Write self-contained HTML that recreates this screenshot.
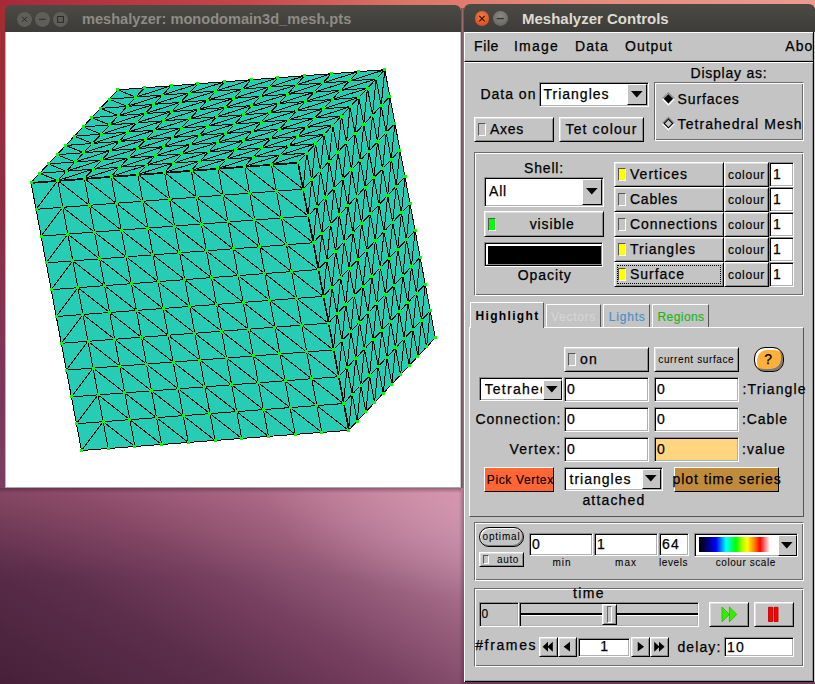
<!DOCTYPE html>
<html><head><meta charset="utf-8"><style>
html,body{margin:0;padding:0;}
body{width:815px;height:684px;overflow:hidden;position:relative;font-family:"Liberation Sans",sans-serif;background:#6e3a5c;}
.t{position:absolute;white-space:nowrap;line-height:1;-webkit-text-stroke:0.25px currentColor;}
.r,.s,.g,.f{position:absolute;box-sizing:border-box;}
.r{background:#c4c4c4;border:1px solid;border-color:#fff #000 #000 #fff;box-shadow:inset 1px 1px 0 #dedede,inset -1px -1px 0 #8c8c8c;}
.s{background:#fff;border:1px solid;border-color:#8c8c8c #fff #fff #8c8c8c;box-shadow:inset 1px 1px 0 #000,inset -1px -1px 0 #b0b0b0;}
.g{border:1px solid;border-color:#6a6a6a #fff #fff #6a6a6a;box-shadow:inset 1px 1px 0 #fff,inset -1px -1px 0 #6a6a6a;}
</style></head><body>
<div style="position:absolute;left:0;top:0;width:815px;height:14px;background:linear-gradient(90deg,#a8283a 0%,#c8454a 30%,#dd7468 50%,#e48a7c 70%,#eb9c90 100%)"></div>
<div style="position:absolute;left:0;top:5px;width:6px;height:484px;background:linear-gradient(#a52c32 0%,#8e2e42 40%,#7c3658 75%,#7a3e62 100%)"></div>
<div style="position:absolute;left:0;top:488px;width:464px;height:196px;background:linear-gradient(180deg,rgba(200,110,130,0.28) 0px,rgba(200,110,130,0) 90px),radial-gradient(ellipse 200px 110px at 464px 0px,rgba(225,175,200,0.5) 0%,rgba(225,175,200,0) 100%),linear-gradient(30deg,rgb(70,32,56) 0%,rgb(92,46,76) 30%,rgb(120,64,96) 50%,rgb(158,100,130) 72%,rgb(212,158,184) 100%)"></div>
<div style="position:absolute;left:0;top:488px;width:461px;height:5px;background:linear-gradient(rgba(40,10,30,0.35),rgba(40,10,30,0))"></div>
<div style="position:absolute;left:461px;top:8px;width:3px;height:24px;background:linear-gradient(90deg,#5a4a48,#9a6868 40%,#9a6868 60%,#5a4a48)"></div>
<div style="position:absolute;left:461px;top:32px;width:1px;height:456px;background:#646060"></div>
<div style="position:absolute;left:462px;top:32px;width:2px;height:456px;background:linear-gradient(90deg,#7c5c6a,#8a7a80)"></div>
<div style="position:absolute;left:459px;top:488px;width:5px;height:196px;background:linear-gradient(90deg,rgba(60,20,40,0),rgba(60,20,40,0.35))"></div>
<div style="position:absolute;left:464px;top:682px;width:351px;height:2px;background:#6e3a5c"></div>
<div style="position:absolute;left:464px;top:4px;width:351px;height:29px;background:linear-gradient(#4b4a45,#3c3b37);border-radius:6px 6px 0 0"></div>
<div style="position:absolute;left:474.6px;top:11.2px;width:14.8px;height:14.8px;border-radius:50%;background:radial-gradient(circle at 50% 35%,#f57a4a,#e05a24 60%,#c2441a)"></div>
<div style="position:absolute;left:492.9px;top:11.2px;width:14.8px;height:14.8px;border-radius:50%;background:radial-gradient(circle at 50% 35%,#8a8984,#6c6b66 70%,#5c5b57)"></div>
<svg style="position:absolute;left:464px;top:0" width="60" height="36"><path d="M15.3 15.9L20.7 21.3M20.7 15.9L15.3 21.3" stroke="#2a1208" stroke-width="1.1"/><path d="M32.8 18.6h7" stroke="#35342f" stroke-width="1.3"/></svg>
<div class="t" style="left:522px;top:10.84px;font-size:15px;color:#dfdbd2;font-weight:bold;letter-spacing:0.000px;-webkit-text-stroke:0;">Meshalyzer Controls</div>
<div style="position:absolute;left:464px;top:32px;width:350px;height:650px;background:#c4c4c4;box-sizing:border-box;border-right:1px solid #000;border-bottom:1px solid #000;box-shadow:inset -1px -1px 0 #9a9a9a"></div>
<div style="position:absolute;left:814px;top:32px;width:1px;height:650px;background:#d0d0d0"></div>
<div style="position:absolute;left:464px;top:32px;width:1px;height:650px;background:#fff"></div>
<div style="position:absolute;left:464px;top:62px;width:349px;height:1px;background:#fff"></div>
<div style="position:absolute;left:464px;top:32px;width:349px;height:30px;box-sizing:border-box;border-top:1px solid #fff;border-left:1px solid #fff;border-bottom:1px solid #000;box-shadow:inset 0 -1px 0 #a8a8a8"></div>
<div class="t" style="left:474px;top:39.37px;font-size:14px;color:#000;font-weight:normal;letter-spacing:0.613px;">File</div>
<div class="t" style="left:514px;top:39.37px;font-size:14px;color:#000;font-weight:normal;letter-spacing:1.222px;">Image</div>
<div class="t" style="left:575px;top:39.37px;font-size:14px;color:#000;font-weight:normal;letter-spacing:1.109px;">Data</div>
<div class="t" style="left:625px;top:39.37px;font-size:14px;color:#000;font-weight:normal;letter-spacing:0.997px;">Output</div>
<div class="t" style="left:785.3px;top:39.37px;font-size:14px;color:#000;font-weight:normal;letter-spacing:1.031px;">Abo</div>
<div class="t" style="left:480.4px;top:87.37px;font-size:14px;color:#000;font-weight:normal;letter-spacing:0.998px;">Data on</div>
<div class="s" style="left:539px;top:82px;width:110px;height:25px;"></div>
<div class="t" style="left:543.5px;top:87.37px;font-size:14px;color:#000;font-weight:normal;letter-spacing:0.997px;">Triangles</div>
<div class="r" style="left:627px;top:84px;width:20px;height:21px;box-shadow:none"></div>
<svg style="position:absolute;left:630.6px;top:90.6px" width="12.6" height="7.6"><path d="M0 0H11.6L5.8 6.6z" fill="#000"/></svg>
<div class="r" style="left:474px;top:117px;width:80px;height:25px;"></div>
<div class="f" style="left:478px;top:123px;width:8px;height:13px;border:1px solid;border-color:#555 #fff #fff #555;background:transparent"></div>
<div class="t" style="left:490px;top:122.37px;font-size:14px;color:#000;font-weight:normal;letter-spacing:0.719px;">Axes</div>
<div class="r" style="left:559px;top:117px;width:85px;height:25px;"></div>
<div class="t" style="left:565.5px;top:122.37px;font-size:14px;color:#000;font-weight:normal;letter-spacing:1.133px;">Tet colour</div>
<div class="t" style="left:690.5px;top:66.37px;font-size:14px;color:#000;font-weight:normal;letter-spacing:0.777px;">Display as:</div>
<div class="g" style="left:654px;top:82px;width:150px;height:59px;"></div>
<svg style="position:absolute;left:656px;top:88px" width="24" height="46"><path d="M6.4 10.8L12.4 4.8L18.4 10.8" fill="none" stroke="#8a8a8a" stroke-width="1.3"/><path d="M18.4 10.8L12.4 16.8L6.4 10.8" fill="none" stroke="#fff" stroke-width="1.3"/><path d="M12.4 6.2L17 10.8L12.4 15.4L7.8 10.8z" fill="#000"/><path d="M6.4 35.5L12.4 29.5L18.4 35.5" fill="none" stroke="#8a8a8a" stroke-width="1.3"/><path d="M18.4 35.5L12.4 41.5L6.4 35.5" fill="none" stroke="#fff" stroke-width="1.3"/><path d="M12.4 31.2L16.7 35.5L12.4 39.8L8.1 35.5z" fill="none" stroke="#000" stroke-width="1.1"/></svg>
<div class="t" style="left:677.6px;top:92.37px;font-size:14px;color:#000;font-weight:normal;letter-spacing:0.846px;">Surfaces</div>
<div class="t" style="left:677.6px;top:116.87px;font-size:14px;color:#000;font-weight:normal;letter-spacing:1.056px;">Tetrahedral Mesh</div>
<div class="g" style="left:474px;top:152px;width:330px;height:144px;"></div>
<div class="t" style="left:524px;top:161.37px;font-size:14px;color:#000;font-weight:normal;letter-spacing:0.831px;">Shell:</div>
<div class="s" style="left:484px;top:177px;width:120px;height:30px;"></div>
<div class="t" style="left:489px;top:184.37px;font-size:14px;color:#000;font-weight:normal;letter-spacing:0.812px;">All</div>
<div class="r" style="left:582px;top:179px;width:20px;height:26px;box-shadow:none"></div>
<svg style="position:absolute;left:585.6px;top:188.4px" width="12.6" height="7.6"><path d="M0 0H11.6L5.8 6.6z" fill="#000"/></svg>
<div class="r" style="left:484px;top:211px;width:120px;height:26px;"></div>
<div class="f" style="left:488px;top:218px;width:8px;height:13px;border:1px solid;border-color:#555 #fff #fff #555;background:#00ff00"></div>
<div class="t" style="left:529.7px;top:217.37px;font-size:14px;color:#000;font-weight:normal;letter-spacing:0.873px;">visible</div>
<div class="s" style="left:484px;top:242px;width:119px;height:25px;background:#000;box-shadow:inset 1px 1px 0 #000"></div>
<div style="position:absolute;left:486px;top:244px;width:116px;height:21px;box-sizing:border-box;border-style:solid;border-width:2px 1px 1px 2px;border-color:#fff #8c8c8c #8c8c8c #fff;background:#000"></div>
<div class="t" style="left:517.7px;top:268.37px;font-size:14px;color:#000;font-weight:normal;letter-spacing:0.935px;">Opacity</div>
<div class="r" style="left:614px;top:162px;width:110px;height:25px;"></div>
<div class="f" style="left:618px;top:168px;width:8px;height:13px;border:1px solid;border-color:#555 #fff #fff #555;background:#ffff00"></div>
<div class="t" style="left:630px;top:167.37px;font-size:14px;color:#000;font-weight:normal;letter-spacing:1.025px;">Vertices</div>
<div class="r" style="left:724px;top:162px;width:45px;height:25px;"></div>
<div class="t" style="left:728px;top:169.03px;font-size:12px;color:#000;font-weight:normal;letter-spacing:0.719px;-webkit-text-stroke:0.15px currentColor;">colour</div>
<div class="s" style="left:769px;top:162px;width:25px;height:25px;"></div>
<div class="t" style="left:773px;top:167.37px;font-size:14px;color:#000;font-weight:normal;letter-spacing:1.219px;">1</div>
<div class="r" style="left:614px;top:187px;width:110px;height:25px;"></div>
<div class="f" style="left:618px;top:193px;width:8px;height:13px;border:1px solid;border-color:#555 #fff #fff #555;background:transparent"></div>
<div class="t" style="left:630px;top:192.37px;font-size:14px;color:#000;font-weight:normal;letter-spacing:0.740px;">Cables</div>
<div class="r" style="left:724px;top:187px;width:45px;height:25px;"></div>
<div class="t" style="left:728px;top:194.03px;font-size:12px;color:#000;font-weight:normal;letter-spacing:0.719px;-webkit-text-stroke:0.15px currentColor;">colour</div>
<div class="s" style="left:769px;top:187px;width:25px;height:25px;"></div>
<div class="t" style="left:773px;top:192.37px;font-size:14px;color:#000;font-weight:normal;letter-spacing:1.219px;">1</div>
<div class="r" style="left:614px;top:212px;width:110px;height:25px;"></div>
<div class="f" style="left:618px;top:218px;width:8px;height:13px;border:1px solid;border-color:#555 #fff #fff #555;background:transparent"></div>
<div class="t" style="left:630px;top:217.37px;font-size:14px;color:#000;font-weight:normal;letter-spacing:0.928px;">Connections</div>
<div class="r" style="left:724px;top:212px;width:45px;height:25px;"></div>
<div class="t" style="left:728px;top:219.03px;font-size:12px;color:#000;font-weight:normal;letter-spacing:0.719px;-webkit-text-stroke:0.15px currentColor;">colour</div>
<div class="s" style="left:769px;top:212px;width:25px;height:25px;"></div>
<div class="t" style="left:773px;top:217.37px;font-size:14px;color:#000;font-weight:normal;letter-spacing:1.219px;">1</div>
<div class="r" style="left:614px;top:237px;width:110px;height:25px;"></div>
<div class="f" style="left:618px;top:243px;width:8px;height:13px;border:1px solid;border-color:#555 #fff #fff #555;background:#ffff00"></div>
<div class="t" style="left:630px;top:242.37px;font-size:14px;color:#000;font-weight:normal;letter-spacing:0.997px;">Triangles</div>
<div class="r" style="left:724px;top:237px;width:45px;height:25px;"></div>
<div class="t" style="left:728px;top:244.03px;font-size:12px;color:#000;font-weight:normal;letter-spacing:0.719px;-webkit-text-stroke:0.15px currentColor;">colour</div>
<div class="s" style="left:769px;top:237px;width:25px;height:25px;"></div>
<div class="t" style="left:773px;top:242.37px;font-size:14px;color:#000;font-weight:normal;letter-spacing:1.219px;">1</div>
<div class="r" style="left:614px;top:262px;width:110px;height:25px;"></div>
<div class="f" style="left:618px;top:268px;width:8px;height:13px;border:1px solid;border-color:#555 #fff #fff #555;background:#ffff00"></div>
<div class="t" style="left:630px;top:267.37px;font-size:14px;color:#000;font-weight:normal;letter-spacing:0.967px;">Surface</div>
<div class="r" style="left:724px;top:262px;width:45px;height:25px;"></div>
<div class="t" style="left:728px;top:269.03px;font-size:12px;color:#000;font-weight:normal;letter-spacing:0.719px;-webkit-text-stroke:0.15px currentColor;">colour</div>
<div class="s" style="left:769px;top:262px;width:25px;height:25px;"></div>
<div class="t" style="left:773px;top:267.37px;font-size:14px;color:#000;font-weight:normal;letter-spacing:1.219px;">1</div>
<div style="position:absolute;left:617px;top:265px;width:104px;height:19px;box-sizing:border-box;border:1px dotted #000"></div>
<div class="f" style="left:469px;top:327px;width:335px;height:190px;border-style:solid;border-width:1px;border-color:#fff #555 #555 #fff"></div>
<div class="f" style="left:546px;top:304px;width:55px;height:23px;border-style:solid;border-width:1px 1px 0 1px;border-color:#fff #555 #555 #fff"></div>
<div class="f" style="left:603px;top:304px;width:47px;height:23px;border-style:solid;border-width:1px 1px 0 1px;border-color:#fff #555 #555 #fff"></div>
<div class="f" style="left:652px;top:304px;width:57px;height:23px;border-style:solid;border-width:1px 1px 0 1px;border-color:#fff #555 #555 #fff"></div>
<div class="f" style="left:470px;top:302px;width:74px;height:26px;background:#c4c4c4;border-style:solid;border-width:1px 1px 0 1px;border-color:#fff #555 #555 #fff"></div>
<div class="t" style="left:475.5px;top:309.53px;font-size:12px;color:#000;font-weight:bold;letter-spacing:1.337px;-webkit-text-stroke:0;">Highlight</div>
<div class="t" style="left:551px;top:310.63px;font-size:12px;color:#d6d6d6;font-weight:normal;letter-spacing:0.712px;-webkit-text-stroke:0.15px currentColor;">Vectors</div>
<div class="t" style="left:608.7px;top:311.03px;font-size:12px;color:#4a8ec8;font-weight:normal;letter-spacing:0.831px;-webkit-text-stroke:0.15px currentColor;">Lights</div>
<div class="t" style="left:657.5px;top:311.03px;font-size:12px;color:#18b818;font-weight:normal;letter-spacing:0.424px;-webkit-text-stroke:0.15px currentColor;">Regions</div>
<div class="r" style="left:564px;top:347px;width:85px;height:25px;"></div>
<div class="f" style="left:568px;top:353px;width:8px;height:13px;border:1px solid;border-color:#555 #fff #fff #555;background:transparent"></div>
<div class="t" style="left:580px;top:352.37px;font-size:14px;color:#000;font-weight:normal;letter-spacing:1.219px;">on</div>
<div class="r" style="left:654px;top:347px;width:85px;height:25px;"></div>
<div class="t" style="left:658.3px;top:354.69px;font-size:10px;color:#000;font-weight:normal;letter-spacing:0.620px;-webkit-text-stroke:0.05px currentColor;">current surface</div>
<div style="position:absolute;left:754px;top:347px;width:30px;height:25px;box-sizing:border-box;border-radius:11px/11px;background:#ffb03a;border:1px solid #000;box-shadow:inset 2px 2px 0 #fff,inset -2px -2px 0 #7a7a7a"></div>
<div class="t" style="left:764.2px;top:352.37px;font-size:14px;color:#000;font-weight:normal;letter-spacing:0.000px;">?</div>
<div class="s" style="left:479px;top:377px;width:84px;height:24px;"></div>
<div class="t" style="left:484.5px;top:382.37px;font-size:14px;color:#000;font-weight:normal;letter-spacing:1.273px;width:57.5px;overflow:hidden;">Tetrahedral</div>
<div class="r" style="left:542.5px;top:380px;width:19px;height:20px;box-shadow:none"></div>
<svg style="position:absolute;left:545.5px;top:386.4px" width="12.6" height="7.6"><path d="M0 0H11.6L5.8 6.6z" fill="#000"/></svg>
<div class="s" style="left:564px;top:377px;width:85px;height:25px;"></div>
<div class="s" style="left:654px;top:377px;width:85px;height:25px;"></div>
<div class="t" style="left:567px;top:381.87px;font-size:14px;color:#000;font-weight:normal;letter-spacing:1.219px;">0</div>
<div class="t" style="left:657px;top:381.87px;font-size:14px;color:#000;font-weight:normal;letter-spacing:1.219px;">0</div>
<div class="s" style="left:564px;top:407px;width:85px;height:25px;"></div>
<div class="s" style="left:654px;top:407px;width:85px;height:25px;"></div>
<div class="t" style="left:567px;top:411.87px;font-size:14px;color:#000;font-weight:normal;letter-spacing:1.219px;">0</div>
<div class="t" style="left:657px;top:411.87px;font-size:14px;color:#000;font-weight:normal;letter-spacing:1.219px;">0</div>
<div class="s" style="left:564px;top:437px;width:85px;height:25px;"></div>
<div class="s" style="left:654px;top:437px;width:85px;height:25px;background:#ffd67f"></div>
<div class="t" style="left:567px;top:441.87px;font-size:14px;color:#000;font-weight:normal;letter-spacing:1.219px;">0</div>
<div class="t" style="left:657px;top:441.87px;font-size:14px;color:#000;font-weight:normal;letter-spacing:1.219px;">0</div>
<div class="t" style="left:742.6px;top:382.37px;font-size:14px;color:#000;font-weight:normal;letter-spacing:1.120px;">:Triangle</div>
<div class="t" style="left:742px;top:412.37px;font-size:14px;color:#000;font-weight:normal;letter-spacing:0.924px;">:Cable</div>
<div class="t" style="left:742px;top:441.87px;font-size:14px;color:#000;font-weight:normal;letter-spacing:1.109px;">:value</div>
<div class="t" style="left:475.4px;top:411.87px;font-size:14px;color:#000;font-weight:normal;letter-spacing:1.028px;">Connection:</div>
<div class="t" style="left:509.4px;top:442.37px;font-size:14px;color:#000;font-weight:normal;letter-spacing:1.203px;">Vertex:</div>
<div class="r" style="left:484px;top:467px;width:70px;height:25px;background:#ff6633;box-shadow:none"></div>
<div class="t" style="left:486.8px;top:473.53px;font-size:12px;color:#000;font-weight:normal;letter-spacing:0.635px;-webkit-text-stroke:0.15px currentColor;width:66px;overflow:hidden;">Pick Vertex</div>
<div class="s" style="left:564px;top:467px;width:99px;height:24px;"></div>
<div class="t" style="left:569.5px;top:472.37px;font-size:14px;color:#000;font-weight:normal;letter-spacing:1.012px;">triangles</div>
<div class="r" style="left:642px;top:469px;width:19px;height:20px;box-shadow:none"></div>
<svg style="position:absolute;left:645px;top:475.4px" width="12.6" height="7.6"><path d="M0 0H11.6L5.8 6.6z" fill="#000"/></svg>
<div class="r" style="left:674px;top:467px;width:105px;height:25px;background:#c08c3c;box-shadow:none"></div>
<div class="t" style="left:672.6px;top:472.37px;font-size:14px;color:#000;font-weight:normal;letter-spacing:0.931px;">plot time series</div>
<div class="t" style="left:582.4px;top:493.37px;font-size:14px;color:#000;font-weight:normal;letter-spacing:1.164px;">attached</div>
<div class="g" style="left:474px;top:522px;width:330px;height:59px;"></div>
<div style="position:absolute;left:479px;top:527px;width:45px;height:20px;box-sizing:border-box;border-radius:10px;border:1px solid #000;box-shadow:inset 1px 1px 0 #fff,inset -1px -1px 0 #777"></div>
<div class="t" style="left:482.5px;top:532.00px;font-size:10px;color:#000;font-weight:normal;letter-spacing:0.824px;-webkit-text-stroke:0.05px currentColor;">optimal</div>
<div class="r" style="left:479px;top:552px;width:45px;height:15px;"></div>
<div class="f" style="left:483px;top:555px;width:6px;height:9px;border:1px solid;border-color:#555 #fff #fff #555;background:transparent"></div>
<div class="t" style="left:497px;top:555.20px;font-size:10px;color:#000;font-weight:normal;letter-spacing:0.633px;-webkit-text-stroke:0.05px currentColor;">auto</div>
<div class="s" style="left:529px;top:533px;width:64px;height:23px;"></div>
<div class="t" style="left:532px;top:536.97px;font-size:14px;color:#000;font-weight:normal;letter-spacing:1.219px;">0</div>
<div class="s" style="left:594px;top:533px;width:64px;height:23px;"></div>
<div class="t" style="left:597px;top:536.97px;font-size:14px;color:#000;font-weight:normal;letter-spacing:1.219px;">1</div>
<div class="s" style="left:659px;top:533px;width:30px;height:23px;"></div>
<div class="t" style="left:662px;top:536.97px;font-size:14px;color:#000;font-weight:normal;letter-spacing:1.219px;">64</div>
<div class="t" style="left:552.5px;top:558.20px;font-size:10px;color:#000;font-weight:normal;letter-spacing:0.964px;-webkit-text-stroke:0.05px currentColor;">min</div>
<div class="t" style="left:615.1px;top:558.20px;font-size:10px;color:#000;font-weight:normal;letter-spacing:1.036px;-webkit-text-stroke:0.05px currentColor;">max</div>
<div class="t" style="left:659px;top:558.20px;font-size:10px;color:#000;font-weight:normal;letter-spacing:0.573px;-webkit-text-stroke:0.05px currentColor;">levels</div>
<div class="t" style="left:715.8px;top:558.20px;font-size:10px;color:#000;font-weight:normal;letter-spacing:0.553px;-webkit-text-stroke:0.05px currentColor;">colour scale</div>
<div class="s" style="left:694px;top:533px;width:104px;height:24px;"></div>
<div style="position:absolute;left:698.6px;top:537px;width:71px;height:15.4px;background:linear-gradient(90deg,#000 0%,#00008c 14%,#0000ff 24%,#00ffff 38%,#00ff00 52%,#c0ff00 62%,#ffff00 68%,#ff8000 78%,#ff0000 86%,#fff 100%)"></div>
<div class="r" style="left:777.5px;top:535px;width:19px;height:21px;box-shadow:none"></div>
<svg style="position:absolute;left:780.8px;top:542.4px" width="12.6" height="7.6"><path d="M0 0H11.6L5.8 6.6z" fill="#000"/></svg>
<div class="g" style="left:474px;top:588px;width:330px;height:79px;"></div>
<div class="t" style="left:573px;top:585.67px;font-size:14px;color:#000;font-weight:normal;letter-spacing:1.391px;">time</div>
<div class="s" style="left:479px;top:602px;width:40px;height:25px;background:#c4c4c4"></div>
<div class="t" style="left:481.4px;top:608.33px;font-size:12px;color:#000;font-weight:normal;letter-spacing:1.328px;-webkit-text-stroke:0.15px currentColor;">0</div>
<div class="s" style="left:519px;top:602px;width:180px;height:25px;background:#c4c4c4"></div>
<div style="position:absolute;left:521px;top:612.6px;width:177px;height:2.4px;background:#000;box-shadow:0 1px 0 #fff"></div>
<div class="r" style="left:602px;top:604px;width:15px;height:21px;"></div>
<div style="position:absolute;left:607px;top:606px;width:5px;height:17px;box-sizing:border-box;border:1px solid;border-color:#666 #fff #fff #666"></div>
<div class="r" style="left:709px;top:602px;width:40px;height:25px;"></div>
<svg style="position:absolute;left:709px;top:602px" width="40" height="25"><path d="M13 5L20.4 12.4L13 19.8z M20.4 5L27.8 12.4L20.4 19.8z" fill="#33ee00" stroke="#22aa00" stroke-width="0.7"/></svg>
<div class="r" style="left:754px;top:602px;width:40px;height:25px;"></div>
<svg style="position:absolute;left:754px;top:602px" width="40" height="25"><path d="M14.5 5.3h4v14.2h-4z M20 5.3h4v14.2h-4z" fill="#ff0000" stroke="#b00000" stroke-width="0.8"/></svg>
<div class="t" style="left:475.2px;top:638.37px;font-size:14px;color:#000;font-weight:normal;letter-spacing:1.636px;">#frames</div>
<div class="r" style="left:539px;top:637px;width:19px;height:20px;"></div>
<div class="r" style="left:558px;top:637px;width:19px;height:20px;"></div>
<div class="s" style="left:578px;top:638px;width:52px;height:19px;"></div>
<div class="t" style="left:600.3px;top:638.97px;font-size:14px;color:#000;font-weight:normal;letter-spacing:1.219px;">1</div>
<div class="r" style="left:631px;top:637px;width:19px;height:20px;"></div>
<div class="r" style="left:650px;top:637px;width:19px;height:20px;"></div>
<svg style="position:absolute;left:539px;top:637px" width="131" height="20"><path d="M3.6 9.7L9 4.7V14.7z M8.4 9.7L13.8 4.7V14.7z M24.6 9.7L31 4.8V14.6z" fill="#000"/><path d="M98.7 4.8L105.1 9.7L98.7 14.6z M115.2 4.7L120.6 9.7L115.2 14.7z M120 4.7L125.6 9.7L120 14.7z" fill="#000"/></svg>
<div class="t" style="left:677.4px;top:639.67px;font-size:14px;color:#000;font-weight:normal;letter-spacing:1.109px;">delay:</div>
<div class="s" style="left:724px;top:637px;width:70px;height:20px;"></div>
<div class="t" style="left:727px;top:640.37px;font-size:14px;color:#000;font-weight:normal;letter-spacing:1.219px;">10</div>
<div style="position:absolute;left:5px;top:5px;width:456px;height:28px;background:linear-gradient(#4b4a45,#3c3b37);border-radius:6px 6px 0 0"></div>
<div style="position:absolute;left:5px;top:32px;width:456px;height:456px;background:#fff;box-sizing:border-box;border-left:1px solid #b8b8b8;border-right:1px solid #c8c8c8;border-bottom:1px solid #a8a8a8"></div>
<div style="position:absolute;left:17.1px;top:11.9px;width:14.8px;height:14.8px;border-radius:50%;background:#5f5e59"></div>
<div style="position:absolute;left:34.9px;top:11.9px;width:14.8px;height:14.8px;border-radius:50%;background:#5f5e59"></div>
<div style="position:absolute;left:53.0px;top:11.9px;width:14.8px;height:14.8px;border-radius:50%;background:#5f5e59"></div>
<svg style="position:absolute;left:0;top:0" width="80" height="36"><path d="M22 16.8L27 21.8M27 16.8L22 21.8" stroke="#2a2926" stroke-width="1"/><path d="M39 19.3h6.6" stroke="#2a2926" stroke-width="1"/><rect x="57.6" y="16.5" width="5.8" height="5.8" fill="none" stroke="#2a2926" stroke-width="1"/></svg>
<div class="t" style="left:82px;top:11.97px;font-size:14.6px;color:#8e8c86;font-weight:bold;letter-spacing:0.000px;-webkit-text-stroke:0;">meshalyzer: monodomain3d_mesh.pts</div>
<svg width="456" height="456" viewBox="5 32 456 456" style="position:absolute;left:5px;top:32px">
<polygon points="31,182.5 117.75,89.85 384.8,69.7 435.3,337.7 348.55,430.35 81.5,450.5" fill="#26ccb4"/>
<path d="M316.8 405.57L321.85 432.37M383.25 393.29L386.88 357.23M126.26 256.86L131.31 283.66M238.13 275.6L264.84 273.58M350.75 331.42L355.8 358.22M83.73 152.69L119.11 141.41M314.72 118.04L323.4 108.78M99.56 258.87L104.61 285.67M386.88 357.23L391.93 384.02M340.75 90.25L376.12 78.96M119.79 167.19L146.5 165.18M39.67 173.24L66.38 171.22M100.4 108.38L118.43 115.63M269.31 87.02L277.98 77.76M390.5 321.16L395.55 347.96M364.48 348.96L369.52 375.75M371.73 276.82L376.77 303.62M296.6 298.37L301.65 325.16M173.2 163.16L199.91 161.14M396.32 186.16L401.38 212.96M280.02 155.1L288.7 145.84M109.75 124.9L145.13 113.61M206.38 250.81L211.43 277.61M358.1 71.72L384.8 69.7M338.45 376.75L343.5 403.55M308.15 215.95L313.2 242.75M93.05 368.09L124.81 392.87M92.41 143.43L127.78 132.14M180.51 102.34L215.89 91.05M373.92 177.89L382.6 168.63M228.03 222L233.09 248.8M344.27 241.75L349.32 268.56M101.08 134.16L109.75 124.9M57.7 180.49L93.08 169.2M179.68 252.82L206.38 250.81M83.05 126.91L101.08 134.16M290.09 407.58L321.85 432.37M199.88 360.02L226.58 358.01M347.9 205.69L352.95 232.49M329.12 161.36L334.18 188.16M164.53 172.43L191.23 170.41M39.67 173.24L48.35 163.97M146.5 165.18L155.17 155.91M251.95 105.55L260.63 96.29M342.08 340.68L347.12 367.49M72.85 260.88L104.61 285.67M243.28 114.82L251.95 105.55M373.15 339.69L381.83 330.43M370.3 213.96L373.92 177.89M46.15 262.9L72.85 260.88M373.92 177.89L378.97 204.69M208.58 151.88L243.96 140.6M301.65 325.16L306.7 351.97M253.32 157.12L261.99 147.85M217.25 142.62L225.93 133.35M98.11 394.88L124.81 392.87M173.2 163.16L208.58 151.88M191.23 170.41L226.61 159.13M244.64 166.38L271.35 164.37M168.12 335.24L173.17 362.04M321.88 233.48L326.93 260.28M368.1 312.89L371.73 276.82M375.35 240.76L378.97 204.69M392.7 222.23L401.38 212.96M136.37 310.46L163.07 308.44M409.27 365.5L417.95 356.23M303.1 189.15L306.73 153.08M181.19 128.12L207.9 126.1M194.82 333.23L226.58 358.01M137.82 174.44L146.5 165.18M221.53 331.21L253.28 356M65.7 145.44L74.38 136.18M322.72 82.99L358.1 71.72M129.86 419.67L134.91 446.47M366.68 250.02L375.35 240.76M111.11 176.46L116.16 203.26M372.5 115.03L381.18 105.76M135.78 97.1L144.45 87.84M355.8 358.22L359.42 322.15M206.38 250.81L238.13 275.6M412.9 329.43L416.52 293.37M389.07 258.29L397.75 249.03M243.19 302.39L248.24 329.19M188.32 442.44L215.03 440.43M174.62 226.03L206.38 250.81M311.78 179.88L315.4 143.82M285.04 380.78L290.09 407.58M249.69 193.18L254.74 219.98M301.65 325.16L328.35 323.15M46.15 262.9L51.2 289.7M174.62 226.03L179.68 252.82M276.4 191.17L303.1 189.15M141.41 337.25L146.46 364.06M119.79 167.19L155.17 155.91M93.08 169.2L119.79 167.19M94.51 232.07L99.56 258.87M335.6 251.02L339.22 214.95M244.64 166.38L280.02 155.1M76.45 423.7L98.11 394.88M402.8 275.83L411.48 266.56M269.31 87.02L296.01 85.01M389.07 258.29L394.12 285.09M217.94 168.4L244.64 166.38M168.12 335.24L194.82 333.23M41.1 236.1L62.75 207.29M93.08 169.2L101.76 159.94M75.06 161.96L83.73 152.69M318.25 269.55L321.88 233.48M368.88 151.09L372.5 115.03M377.55 141.83L381.18 105.76M261.31 122.07L288.01 120.05M211.43 277.61L238.13 275.6M261.99 147.85L297.37 136.57M243.96 140.6L279.34 129.32M360.85 385.02L369.52 375.75M243.96 140.6L270.67 138.58M279.99 353.98L306.7 351.97M145.81 139.4L181.19 128.12M386.23 132.56L394.9 123.3M163.84 146.64L199.23 135.37M155.17 155.91L181.88 153.9M382.6 168.63L386.23 132.56M236.68 411.61L268.44 436.39M162.49 95.08L189.19 93.07M296.6 298.37L323.3 296.35M126.26 256.86L158.02 281.64M374.57 402.56L383.25 393.29M118.43 115.63L145.13 113.61M360.85 385.02L365.9 411.82M381.18 105.76L386.23 132.56M415.1 230.5L420.15 257.3M407.85 302.63L416.52 293.37M110.44 150.68L137.14 148.66M233.09 248.8L259.79 246.78M325.5 197.42L334.18 188.16M88 341.28L119.76 366.07M365.9 411.82L369.52 375.75M111.11 176.46L142.87 201.24M280.02 155.1L306.73 153.08M124.81 392.87L151.51 390.86M189.19 93.07L197.87 83.81M326.93 260.28L330.55 224.22M391.27 159.36L394.9 123.3M276.4 191.17L281.45 217.97M189.78 306.43L221.53 331.21M261.31 122.07L296.69 110.79M201.33 224.01L233.09 248.8M61.3 343.3L66.35 370.1M269.99 112.81L305.37 101.52M163.16 120.87L171.84 111.6M209.98 413.62L241.73 438.41M178.22 388.84L209.98 413.62M387.65 195.43L396.32 186.16M137.14 148.66L172.52 137.38M101.08 134.16L136.46 122.88M82.95 314.49L109.66 312.47M359.42 322.15L368.1 312.89M127.78 132.14L163.16 120.87M261.31 122.07L269.99 112.81M325.5 197.42L330.55 224.22M366.68 250.02L371.73 276.82M368.1 312.89L373.15 339.69M375.35 240.76L380.4 267.56M57.02 154.7L75.06 161.96M268.44 436.39L295.14 434.38M372.5 115.03L377.55 141.83M288.7 145.84L324.07 134.56M207.9 126.1L234.6 124.08M233.93 98.31L260.63 96.29M151.51 390.86L178.22 388.84M147.92 228.04L152.97 254.84M169.58 199.23L201.33 224.01M209.98 413.62L215.03 440.43M330.55 224.22L334.18 188.16M162.49 95.08L197.87 83.81M305.37 101.52L314.04 92.26M198.54 109.58L233.93 98.31M376.12 78.96L381.18 105.76M194.82 333.23L199.88 360.02M216.48 304.41L221.53 331.21M251.95 105.55L287.34 94.28M84.41 178.47L111.11 176.46M350.75 331.42L354.38 295.36M288.01 120.05L296.69 110.79M346.48 142.82L351.53 169.62M363.05 286.09L366.68 250.02M81.5 450.5L108.2 448.49M296.69 110.79L305.37 101.52M401.38 212.96L410.05 203.7M254.74 219.98L286.5 244.76M142.87 201.24L174.62 226.03M324.07 134.56L329.12 161.36M311.75 378.76L338.45 376.75M183.27 415.64L209.98 413.62M196.28 197.21L228.03 222M215.03 440.43L241.73 438.41M349.42 80.98L384.8 69.7M253.32 157.12L288.7 145.84M190.55 144.63L217.25 142.62M88 341.28L93.05 368.09M367.45 88.23L376.12 78.96M286.5 244.76L318.25 269.55M75.06 161.96L101.76 159.94M201.33 224.01L206.38 250.81M318.25 269.55L323.3 296.35M259.79 246.78L286.5 244.76M67.81 234.09L72.85 260.88M147.92 228.04L174.62 226.03M127.11 106.37L162.49 95.08M137.82 174.44L169.58 199.23M358.77 97.49L363.82 124.29M426.62 346.96L430.25 310.9M430.25 310.9L435.3 337.7M114.71 339.27L146.46 364.06M243.96 140.6L252.63 131.34M332.07 99.51L358.77 97.49M407.85 302.63L412.9 329.43M36.05 209.3L57.7 180.49M114.71 339.27L119.76 366.07M342.08 340.68L345.7 304.62M291.55 271.56L318.25 269.55M376.77 303.62L385.45 294.36M216.57 116.84L243.28 114.82M129.86 419.67L161.62 444.46M331.98 287.08L340.65 277.82M363.82 124.29L367.45 88.23M311.75 378.76L316.8 405.57M183.27 415.64L188.32 442.44M57.02 154.7L65.7 145.44M121.22 230.06L126.26 256.86M66.35 370.1L93.05 368.09M304.69 75.75L331.39 73.73M141.41 337.25L173.17 362.04M381.83 330.43L386.88 357.23M416.52 293.37L425.2 284.1M235.28 149.87L261.99 147.85M189.19 93.07L215.89 91.05M387.65 195.43L392.7 222.23M243.19 302.39L274.94 327.18M347.12 367.49L350.75 331.42M359.42 322.15L364.48 348.96M119.76 366.07L146.46 364.06M321.88 233.48L325.5 197.42M234.6 124.08L269.99 112.81M337.03 313.88L345.7 304.62M391.27 159.36L396.32 186.16M360.2 160.36L368.88 151.09M109.66 312.47L141.41 337.25M421.57 320.17L430.25 310.9M400.6 374.76L404.22 338.69M173.17 362.04L204.93 386.83M345.7 304.62L350.75 331.42M334.18 188.16L342.85 178.89M365.25 187.16L368.88 151.09M94.51 232.07L126.26 256.86M156.56 417.66L161.62 444.46M287.34 94.28L314.04 92.26M172.52 137.38L181.19 128.12M346.48 142.82L355.15 133.56M222.99 195.2L254.74 219.98M339.22 214.95L344.27 241.75M370.3 213.96L375.35 240.76M381.18 105.76L389.85 96.5M263.38 409.6L290.09 407.58M308.15 215.95L316.83 206.68M71.4 396.9L93.05 368.09M348.55 430.35L352.18 394.28M207.9 126.1L216.57 116.84M153.81 104.35L180.51 102.34M269.89 300.38L274.94 327.18M225.25 107.57L260.63 96.29M222.99 195.2L228.03 222M226.58 358.01L253.28 356M281.45 217.97L313.2 242.75M199.91 161.14L226.61 159.13M313.2 242.75L316.83 206.68M340.65 277.82L349.32 268.56M152.97 254.84L184.73 279.62M189.78 306.43L194.82 333.23M216.57 116.84L251.95 105.55M225.25 107.57L233.93 98.31M291.55 271.56L296.6 298.37M31 182.5L39.67 173.24M323.3 296.35L331.98 287.08M103.16 421.69L108.2 448.49M303.1 189.15L308.15 215.95M190.55 144.63L225.93 133.35M235.28 149.87L270.67 138.58M51.2 289.7L72.85 260.88M217.25 142.62L252.63 131.34M394.12 285.09L399.17 311.89M66.35 370.1L71.4 396.9M368.1 312.89L376.77 303.62M48.35 163.97L75.06 161.96M228.03 222L254.74 219.98M320.45 170.62L329.12 161.36M333.4 349.95L338.45 376.75M340.65 277.82L345.7 304.62M395.55 347.96L404.22 338.69M332.75 125.29L341.43 116.02M163.16 120.87L198.54 109.58M190.55 144.63L199.23 135.37M358.77 97.49L367.45 88.23M62.75 207.29L67.81 234.09M169.58 199.23L174.62 226.03M66.38 171.22L93.08 169.2M119.79 167.19L128.47 157.93M399.17 311.89L402.8 275.83M369.52 375.75L378.2 366.49M376.12 78.96L384.8 69.7M191.23 170.41L217.94 168.4M373.92 177.89L377.55 141.83M355.15 133.56L363.82 124.29M343.5 403.55L352.18 394.28M137.14 148.66L163.84 146.64M352.18 394.28L360.85 385.02M199.23 135.37L234.6 124.08M305.37 101.52L340.75 90.25M280.02 155.1L315.4 143.82M320.45 170.62L325.5 197.42M261.99 147.85L270.67 138.58M364.48 348.96L368.1 312.89M351.53 169.62L356.57 196.42M207.22 100.32L242.6 89.04M371.73 276.82L375.35 240.76M378.97 204.69L382.6 168.63M84.41 178.47L119.79 167.19M181.88 153.9L217.25 142.62M352.95 232.49L361.62 223.22M198.54 109.58L225.25 107.57M298.05 162.35L303.1 189.15M376.77 303.62L381.83 330.43M361.62 223.22L370.3 213.96M163.07 308.44L168.12 335.24M264.84 273.58L296.6 298.37M48.35 163.97L57.02 154.7M111.11 176.46L119.79 167.19M155.17 155.91L163.84 146.64M381.83 330.43L390.5 321.16M258.34 382.8L290.09 407.58M285.04 380.78L316.8 405.57M306.05 127.31L332.75 125.29M410.05 203.7L415.1 230.5M156.56 417.66L188.32 442.44M417.95 356.23L426.62 346.96M249.69 193.18L281.45 217.97M355.8 358.22L364.48 348.96M279.34 129.32L306.05 127.31M98.11 394.88L103.16 421.69M260.63 96.29L287.34 94.28M204.93 386.83L209.98 413.62M258.34 382.8L263.38 409.6M196.28 197.21L201.33 224.01M217.94 168.4L249.69 193.18M378.2 366.49L381.83 330.43M128.47 157.93L137.14 148.66M337.03 313.88L342.08 340.68M271.35 164.37L306.73 153.08M349.42 80.98L376.12 78.96M269.89 300.38L301.65 325.16M116.16 203.26L147.92 228.04M306.7 351.97L311.75 378.76M357.23 421.08L360.85 385.02M109.08 99.11L127.11 106.37M154.49 130.13L189.87 118.85M411.48 266.56L415.1 230.5M238.13 275.6L269.89 300.38M75.06 161.96L110.44 150.68M136.37 310.46L141.41 337.25M334.18 188.16L339.22 214.95M358 259.29L361.62 223.22M295.14 434.38L321.85 432.37M65.7 145.44L83.73 152.69M339.22 214.95L347.9 205.69M366.68 250.02L370.3 213.96M297.37 136.57L324.07 134.56M355.8 358.22L360.85 385.02M238.13 275.6L243.19 302.39M397.75 249.03L401.38 212.96M74.38 136.18L92.41 143.43M372.5 115.03L376.12 78.96M158.02 281.64L163.07 308.44M161.62 444.46L188.32 442.44M206.38 250.81L233.09 248.8M77.91 287.69L104.61 285.67M404.22 338.69L412.9 329.43M365.25 187.16L370.3 213.96M271.35 164.37L276.4 191.17M274.94 327.18L301.65 325.16M306.05 127.31L341.43 116.02M61.3 343.3L88 341.28M264.84 273.58L269.89 300.38M313.2 242.75L318.25 269.55M109.66 312.47L114.71 339.27M199.88 360.02L231.63 384.81M404.22 338.69L409.27 365.5M252.63 131.34L279.34 129.32M226.58 358.01L231.63 384.81M199.88 360.02L204.93 386.83M278.66 103.54L314.04 92.26M136.46 122.88L171.84 111.6M116.16 203.26L121.22 230.06M211.43 277.61L216.48 304.41M164.53 172.43L169.58 199.23M352.18 394.28L357.23 421.08M74.38 136.18L101.08 134.16M278.66 103.54L287.34 94.28M136.46 122.88L145.13 113.61M151.51 390.86L183.27 415.64M363.05 286.09L368.1 312.89M367.45 88.23L372.5 115.03M76.45 423.7L81.5 450.5M104.61 285.67L131.31 283.66M384.02 231.5L392.7 222.23M406.43 239.76L411.48 266.56M127.78 132.14L154.49 130.13M145.81 139.4L172.52 137.38M253.28 356L285.04 380.78M361.62 223.22L366.68 250.02M287.34 94.28L322.72 82.99M41.1 236.1L46.15 262.9M261.99 147.85L288.7 145.84M146.46 364.06L173.17 362.04M288.01 120.05L323.4 108.78M287.34 94.28L296.01 85.01M46.15 262.9L67.81 234.09M241.73 438.41L268.44 436.39M111.11 176.46L137.82 174.44M333.4 349.95L342.08 340.68M248.24 329.19L274.94 327.18M251.95 105.55L278.66 103.54M131.31 283.66L158.02 281.64M390.5 321.16L399.17 311.89M103.16 421.69L134.91 446.47M384.02 231.5L389.07 258.29M74.38 136.18L83.05 126.91M314.04 92.26L340.75 90.25M189.87 118.85L198.54 109.58M197.87 83.81L224.57 81.79M341.43 116.02L350.1 106.76M412.9 329.43L421.57 320.17M128.47 157.93L155.17 155.91M209.98 413.62L236.68 411.61M178.22 388.84L204.93 386.83M62.75 207.29L94.51 232.07M216.48 304.41L248.24 329.19M91.72 117.64L118.43 115.63M215.89 91.05L251.28 79.78M208.58 151.88L217.25 142.62M226.61 159.13L253.32 157.12M99.56 258.87L126.26 256.86M338.45 376.75L347.12 367.49M331.98 287.08L337.03 313.88M378.2 366.49L383.25 393.29M194.82 333.23L221.53 331.21M163.07 308.44L189.78 306.43M332.07 99.51L340.75 90.25M215.89 91.05L224.57 81.79M411.48 266.56L416.52 293.37M270.67 138.58L306.05 127.31M340.75 90.25L349.42 80.98M298.05 162.35L306.73 153.08M347.9 205.69L356.57 196.42M76.45 423.7L103.16 421.69M67.81 234.09L99.56 258.87M151.51 390.86L156.56 417.66M392.7 222.23L396.32 186.16M41.1 236.1L67.81 234.09M318.25 269.55L326.93 260.28M81.5 450.5L103.16 421.69M377.55 141.83L386.23 132.56M316.8 405.57L348.55 430.35M306.7 351.97L333.4 349.95M36.05 209.3L62.75 207.29M142.87 201.24L169.58 199.23M217.94 168.4L222.99 195.2M221.53 331.21L248.24 329.19M111.11 176.46L146.5 165.18M83.05 126.91L109.75 124.9M391.93 384.02L400.6 374.76M135.78 97.1L162.49 95.08M164.53 172.43L199.91 161.14M243.28 114.82L269.99 112.81M199.91 161.14L208.58 151.88M98.11 394.88L129.86 419.67M402.8 275.83L407.85 302.63M406.43 239.76L410.05 203.7M128.47 157.93L163.84 146.64M385.45 294.36L389.07 258.29M110.44 150.68L145.81 139.4M286.5 244.76L313.2 242.75M83.73 152.69L110.44 150.68M296.6 298.37L328.35 323.15M134.91 446.47L161.62 444.46M386.88 357.23L390.5 321.16M251.28 79.78L277.98 77.76M375.35 240.76L384.02 231.5M39.67 173.24L57.7 180.49M323.3 296.35L326.93 260.28M101.76 159.94L137.14 148.66M271.35 164.37L298.05 162.35M178.22 388.84L183.27 415.64M363.82 124.29L372.5 115.03M349.32 268.56L358 259.29M386.23 132.56L389.85 96.5M109.75 124.9L136.46 122.88M101.76 159.94L110.44 150.68M83.05 126.91L91.72 117.64M137.82 174.44L164.53 172.43M204.93 386.83L236.68 411.61M234.6 124.08L261.31 122.07M114.71 339.27L141.41 337.25M191.23 170.41L199.91 161.14M121.22 230.06L152.97 254.84M259.79 246.78L264.84 273.58M342.85 178.89L346.48 142.82M180.51 102.34L207.22 100.32M137.14 148.66L145.81 139.4M233.93 98.31L269.31 87.02M146.5 165.18L181.88 153.9M344.27 241.75L347.9 205.69M354.38 295.36L363.05 286.09M351.53 169.62L355.15 133.56M146.5 165.18L173.2 163.16M82.95 314.49L114.71 339.27M360.85 385.02L364.48 348.96M363.82 124.29L368.88 151.09M383.25 393.29L391.93 384.02M380.4 267.56L384.02 231.5M394.9 123.3L399.95 150.1M142.87 201.24L147.92 228.04M329.12 161.36L332.75 125.29M233.93 98.31L242.6 89.04M56.25 316.5L61.3 343.3M184.73 279.62L216.48 304.41M345.7 304.62L349.32 268.56M341.43 116.02L346.48 142.82M301.65 325.16L333.4 349.95M198.54 109.58L207.22 100.32M350.1 106.76L355.15 133.56M311.78 179.88L316.83 206.68M231.63 384.81L236.68 411.61M184.73 279.62L189.78 306.43M328.35 323.15L331.98 287.08M252.63 131.34L288.01 120.05M126.26 256.86L152.97 254.84M374.57 402.56L378.2 366.49M381.83 330.43L385.45 294.36M337.03 313.88L340.65 277.82M363.05 286.09L371.73 276.82M286.5 244.76L291.55 271.56M279.34 129.32L288.01 120.05M360.2 160.36L363.82 124.29M260.63 96.29L269.31 87.02M421.57 320.17L425.2 284.1M36.05 209.3L41.1 236.1M253.28 356L258.34 382.8M211.43 277.61L243.19 302.39M359.42 322.15L363.05 286.09M93.08 169.2L128.47 157.93M252.63 131.34L261.31 122.07M325.5 197.42L329.12 161.36M425.2 284.1L430.25 310.9M88 341.28L114.71 339.27M48.35 163.97L66.38 171.22M337.8 152.09L341.43 116.02M82.95 314.49L88 341.28M222.99 195.2L249.69 193.18M373.15 339.69L378.2 366.49M380.4 267.56L385.45 294.36M154.49 130.13L163.16 120.87M335.6 251.02L340.65 277.82M189.78 306.43L216.48 304.41M308.15 215.95L311.78 179.88M396.32 186.16L405 176.9M358 259.29L363.05 286.09M179.68 252.82L211.43 277.61M191.23 170.41L222.99 195.2M339.22 214.95L342.85 178.89M199.23 135.37L225.93 133.35M305.37 101.52L332.07 99.51M164.53 172.43L196.28 197.21M254.74 219.98L281.45 217.97M382.6 168.63L387.65 195.43M56.25 316.5L82.95 314.49M181.88 153.9L208.58 151.88M288.01 120.05L314.72 118.04M243.28 114.82L278.66 103.54M337.8 152.09L342.85 178.89M331.39 73.73L358.1 71.72M399.17 311.89L404.22 338.69M316.83 206.68L325.5 197.42M225.93 133.35L261.31 122.07M314.04 92.26L349.42 80.98M401.38 212.96L405 176.9M342.08 340.68L350.75 331.42M340.75 90.25L367.45 88.23M288.7 145.84L315.4 143.82M196.28 197.21L222.99 195.2M385.45 294.36L390.5 321.16M191.23 170.41L196.28 197.21M347.12 367.49L352.18 394.28M110.44 150.68L119.11 141.41M136.46 122.88L163.16 120.87M215.89 91.05L242.6 89.04M93.05 368.09L119.76 366.07M354.38 295.36L359.42 322.15M158.02 281.64L184.73 279.62M290.09 407.58L316.8 405.57M270.67 138.58L297.37 136.57M356.57 196.42L361.62 223.22M386.23 132.56L391.27 159.36M117.75 89.85L135.78 97.1M163.84 146.64L190.55 144.63M207.9 126.1L243.28 114.82M242.6 89.04L277.98 77.76M156.56 417.66L183.27 415.64M303.1 189.15L311.78 179.88M72.85 260.88L99.56 258.87M119.76 366.07L124.81 392.87M342.85 178.89L347.9 205.69M384.02 231.5L387.65 195.43M199.23 135.37L207.9 126.1M311.78 179.88L320.45 170.62M373.15 339.69L376.77 303.62M288.7 145.84L297.37 136.57M242.6 89.04L251.28 79.78M57.7 180.49L84.41 178.47M66.35 370.1L88 341.28M269.89 300.38L296.6 298.37M233.09 248.8L238.13 275.6M314.72 118.04L341.43 116.02M224.57 81.79L251.28 79.78M226.58 358.01L258.34 382.8M144.45 87.84L171.16 85.82M168.12 335.24L199.88 360.02M263.38 409.6L268.44 436.39M225.93 133.35L234.6 124.08M323.4 108.78L358.77 97.49M89.46 205.27L121.22 230.06M368.88 151.09L377.55 141.83M328.35 323.15L333.4 349.95M409.27 365.5L412.9 329.43M129.86 419.67L156.56 417.66M244.64 166.38L249.69 193.18M331.98 287.08L335.6 251.02M173.17 362.04L199.88 360.02M208.58 151.88L235.28 149.87M407.85 302.63L411.48 266.56M360.2 160.36L365.25 187.16M269.99 112.81L296.69 110.79M349.42 80.98L358.1 71.72M421.57 320.17L426.62 346.96M66.38 171.22L101.76 159.94M137.82 174.44L173.2 163.16M89.46 205.27L94.51 232.07M147.92 228.04L179.68 252.82M321.85 432.37L348.55 430.35M173.2 163.16L181.88 153.9M389.85 96.5L394.9 123.3M154.49 130.13L181.19 128.12M243.19 302.39L269.89 300.38M100.4 108.38L109.08 99.11M335.6 251.02L344.27 241.75M77.91 287.69L82.95 314.49M426.62 346.96L435.3 337.7M382.6 168.63L391.27 159.36M368.88 151.09L373.92 177.89M399.17 311.89L407.85 302.63M389.07 258.29L392.7 222.23M297.37 136.57L306.05 127.31M109.66 312.47L136.37 310.46M274.94 327.18L279.99 353.98M94.51 232.07L121.22 230.06M104.61 285.67L136.37 310.46M346.48 142.82L350.1 106.76M316.83 206.68L321.88 233.48M145.13 113.61L171.84 111.6M118.43 115.63L127.11 106.37M231.63 384.81L263.38 409.6M137.82 174.44L142.87 201.24M394.12 285.09L397.75 249.03M402.8 275.83L406.43 239.76M277.98 77.76L304.69 75.75M104.61 285.67L109.66 312.47M395.55 347.96L399.17 311.89M108.2 448.49L134.91 446.47M378.97 204.69L387.65 195.43M340.65 277.82L344.27 241.75M391.27 159.36L399.95 150.1M71.4 396.9L76.45 423.7M347.12 367.49L355.8 358.22M253.32 157.12L280.02 155.1M279.34 129.32L314.72 118.04M405 176.9L410.05 203.7M369.52 375.75L374.57 402.56M179.68 252.82L184.73 279.62M83.73 152.69L92.41 143.43M109.08 99.11L135.78 97.1M296.01 85.01L322.72 82.99M401.38 212.96L406.43 239.76M343.5 403.55L347.12 367.49M356.57 196.42L365.25 187.16M233.09 248.8L264.84 273.58M370.3 213.96L378.97 204.69M271.35 164.37L280.02 155.1M278.66 103.54L305.37 101.52M124.81 392.87L156.56 417.66M326.93 260.28L335.6 251.02M172.52 137.38L199.23 135.37M109.75 124.9L118.43 115.63M236.68 411.61L263.38 409.6M349.32 268.56L354.38 295.36M352.95 232.49L356.57 196.42M234.6 124.08L243.28 114.82M244.64 166.38L276.4 191.17M124.81 392.87L129.86 419.67M127.11 106.37L153.81 104.35M119.11 141.41L145.81 139.4M84.41 178.47L116.16 203.26M258.34 382.8L285.04 380.78M350.75 331.42L359.42 322.15M92.41 143.43L101.08 134.16M103.16 421.69L129.86 419.67M136.37 310.46L168.12 335.24M397.75 249.03L406.43 239.76M173.17 362.04L178.22 388.84M145.13 113.61L180.51 102.34M153.81 104.35L189.19 93.07M183.27 415.64L215.03 440.43M109.08 99.11L117.75 89.85M199.91 161.14L235.28 149.87M216.48 304.41L243.19 302.39M145.13 113.61L153.81 104.35M338.45 376.75L342.08 340.68M153.81 104.35L162.49 95.08M201.33 224.01L228.03 222M281.45 217.97L286.5 244.76M285.04 380.78L311.75 378.76M296.01 85.01L331.39 73.73M417.95 356.23L421.57 320.17M332.07 99.51L367.45 88.23M249.69 193.18L276.4 191.17M314.04 92.26L322.72 82.99M406.43 239.76L415.1 230.5M67.81 234.09L94.51 232.07M141.41 337.25L168.12 335.24M171.84 111.6L180.51 102.34M296.01 85.01L304.69 75.75M330.55 224.22L335.6 251.02M172.52 137.38L207.9 126.1M116.16 203.26L142.87 201.24M259.79 246.78L291.55 271.56M91.72 117.64L109.75 124.9M169.58 199.23L196.28 197.21M276.4 191.17L308.15 215.95M416.52 293.37L421.57 320.17M269.99 112.81L278.66 103.54M117.75 89.85L144.45 87.84M127.78 132.14L136.46 122.88M101.08 134.16L127.78 132.14M221.53 331.21L226.58 358.01M322.72 82.99L331.39 73.73M174.62 226.03L201.33 224.01M291.55 271.56L323.3 296.35M242.6 89.04L269.31 87.02M162.49 95.08L171.16 85.82M279.99 353.98L311.75 378.76M378.97 204.69L384.02 231.5M225.25 107.57L251.95 105.55M207.22 100.32L215.89 91.05M61.3 343.3L82.95 314.49M146.46 364.06L178.22 388.84M281.45 217.97L308.15 215.95M350.1 106.76L358.77 97.49M217.25 142.62L243.96 140.6M260.63 96.29L296.01 85.01M119.76 366.07L151.51 390.86M321.88 233.48L330.55 224.22M395.55 347.96L400.6 374.76M100.4 108.38L127.11 106.37M269.31 87.02L304.69 75.75M248.24 329.19L279.99 353.98M131.31 283.66L163.07 308.44M326.93 260.28L331.98 287.08M163.16 120.87L189.87 118.85M323.4 108.78L350.1 106.76M400.6 374.76L409.27 365.5M248.24 329.19L253.28 356M365.25 187.16L373.92 177.89M77.91 287.69L109.66 312.47M57.02 154.7L83.73 152.69M101.76 159.94L128.47 157.93M354.38 295.36L358 259.29M343.5 403.55L348.55 430.35M365.9 411.82L374.57 402.56M65.7 145.44L92.41 143.43M297.37 136.57L332.75 125.29M181.19 128.12L216.57 116.84M263.38 409.6L295.14 434.38M279.99 353.98L285.04 380.78M397.75 249.03L402.8 275.83M99.56 258.87L131.31 283.66M71.4 396.9L98.11 394.88M274.94 327.18L306.7 351.97M348.55 430.35L357.23 421.08M163.07 308.44L194.82 333.23M184.73 279.62L211.43 277.61M155.17 155.91L190.55 144.63M270.67 138.58L279.34 129.32M135.78 97.1L171.16 85.82M313.2 242.75L321.88 233.48M355.15 133.56L358.77 97.49M352.95 232.49L358 259.29M146.46 364.06L151.51 390.86M306.73 153.08L315.4 143.82M180.51 102.34L189.19 93.07M376.77 303.62L380.4 267.56M253.28 356L279.99 353.98M118.43 115.63L153.81 104.35M416.52 293.37L420.15 257.3M412.9 329.43L417.95 356.23M420.15 257.3L425.2 284.1M323.4 108.78L332.07 99.51M51.2 289.7L77.91 287.69M330.55 224.22L339.22 214.95M91.72 117.64L100.4 108.38M306.7 351.97L338.45 376.75M57.7 180.49L66.38 171.22M164.53 172.43L173.2 163.16M228.03 222L259.79 246.78M306.05 127.31L314.72 118.04M333.4 349.95L337.03 313.88M390.5 321.16L394.12 285.09M225.93 133.35L252.63 131.34M387.65 195.43L391.27 159.36M396.32 186.16L399.95 150.1M131.31 283.66L136.37 310.46M311.75 378.76L343.5 403.55M84.41 178.47L89.46 205.27M158.02 281.64L189.78 306.43M334.18 188.16L337.8 152.09M31 182.5L57.7 180.49M385.45 294.36L394.12 285.09M399.95 150.1L405 176.9M171.84 111.6L198.54 109.58M62.75 207.29L89.46 205.27M315.4 143.82L324.07 134.56M386.88 357.23L395.55 347.96M381.18 105.76L384.8 69.7M377.55 141.83L382.6 168.63M384.8 69.7L389.85 96.5M66.38 171.22L75.06 161.96M271.35 164.37L303.1 189.15M56.25 316.5L77.91 287.69M364.48 348.96L373.15 339.69M371.73 276.82L380.4 267.56M119.11 141.41L154.49 130.13M181.19 128.12L189.87 118.85M254.74 219.98L259.79 246.78M152.97 254.84L179.68 252.82M347.9 205.69L351.53 169.62M322.72 82.99L349.42 80.98M119.11 141.41L127.78 132.14M315.4 143.82L320.45 170.62M316.83 206.68L320.45 170.62M404.22 338.69L407.85 302.63M342.85 178.89L351.53 169.62M316.8 405.57L343.5 403.55M344.27 241.75L352.95 232.49M351.53 169.62L360.2 160.36M189.87 118.85L216.57 116.84M391.93 384.02L395.55 347.96M320.45 170.62L324.07 134.56M357.23 421.08L365.9 411.82M51.2 289.7L56.25 316.5M380.4 267.56L389.07 258.29M189.19 93.07L224.57 81.79M216.57 116.84L225.25 107.57M329.12 161.36L337.8 152.09M411.48 266.56L420.15 257.3M369.52 375.75L373.15 339.69M171.16 85.82L197.87 83.81M57.7 180.49L89.46 205.27M231.63 384.81L258.34 382.8M345.7 304.62L354.38 295.36M358 259.29L366.68 250.02M217.94 168.4L253.32 157.12M235.28 149.87L243.96 140.6M171.84 111.6L207.22 100.32M93.05 368.09L98.11 394.88M121.22 230.06L147.92 228.04M226.61 159.13L261.99 147.85M328.35 323.15L337.03 313.88M352.18 394.28L355.8 358.22M244.64 166.38L253.32 157.12M378.2 366.49L386.88 357.23M323.3 296.35L328.35 323.15M31 182.5L36.05 209.3M217.94 168.4L226.61 159.13M290.09 407.58L295.14 434.38M314.72 118.04L350.1 106.76M226.61 159.13L235.28 149.87M306.73 153.08L311.78 179.88M349.32 268.56L352.95 232.49M356.57 196.42L360.2 160.36M337.8 152.09L346.48 142.82M361.62 223.22L365.25 187.16M264.84 273.58L291.55 271.56M72.85 260.88L77.91 287.69M332.75 125.29L337.8 152.09M204.93 386.83L231.63 384.81M392.7 222.23L397.75 249.03M152.97 254.84L158.02 281.64M145.81 139.4L154.49 130.13M207.22 100.32L233.93 98.31M92.41 143.43L119.11 141.41M127.11 106.37L135.78 97.1M394.12 285.09L402.8 275.83M163.84 146.64L172.52 137.38M296.69 110.79L332.07 99.51M324.07 134.56L332.75 125.29M57.7 180.49L62.75 207.29M355.15 133.56L360.2 160.36M296.69 110.79L323.4 108.78M189.87 118.85L225.25 107.57M236.68 411.61L241.73 438.41M84.41 178.47L93.08 169.2M181.88 153.9L190.55 144.63M89.46 205.27L116.16 203.26" stroke="#000" stroke-width="1" fill="none" shape-rendering="crispEdges"/>
<path d="M31 183L298.05 162.85L349.05 430.35" stroke="#000" stroke-width="1.6" fill="none" shape-rendering="crispEdges"/>
<path d="M190 169h3v3h-3zM141 200h3v3h-3zM253 218h3v3h-3zM123 391h3v3h-3zM235 410h3v3h-3zM187 441h3v3h-3zM415 292h3v3h-3zM61 206h3v3h-3zM125 255h3v3h-3zM90 116h3v3h-3zM383 68h3v3h-3zM241 88h3v3h-3zM339 276h3v3h-3zM351 393h3v3h-3zM208 412h3v3h-3zM370 275h3v3h-3zM206 99h3v3h-3zM98 257h3v3h-3zM210 276h3v3h-3zM162 307h3v3h-3zM273 326h3v3h-3zM390 158h3v3h-3zM260 121h3v3h-3zM118 140h3v3h-3zM325 259h3v3h-3zM183 278h3v3h-3zM377 365h3v3h-3zM247 328h3v3h-3zM310 377h3v3h-3zM345 141h3v3h-3zM390 383h3v3h-3zM279 154h3v3h-3zM136 173h3v3h-3zM248 192h3v3h-3zM118 365h3v3h-3zM182 414h3v3h-3zM294 433h3v3h-3zM108 98h3v3h-3zM304 100h3v3h-3zM346 366h3v3h-3zM351 231h3v3h-3zM221 194h3v3h-3zM203 385h3v3h-3zM285 243h3v3h-3zM267 435h3v3h-3zM116 88h3v3h-3zM172 162h3v3h-3zM365 249h3v3h-3zM93 231h3v3h-3zM157 280h3v3h-3zM143 86h3v3h-3zM396 248h3v3h-3zM307 214h3v3h-3zM320 232h3v3h-3zM286 93h3v3h-3zM178 251h3v3h-3zM372 338h3v3h-3zM144 112h3v3h-3zM242 301h3v3h-3zM305 350h3v3h-3zM47 162h3v3h-3zM162 119h3v3h-3zM340 115h3v3h-3zM198 134h3v3h-3zM216 141h3v3h-3zM74 160h3v3h-3zM371 114h3v3h-3zM416 355h3v3h-3zM305 126h3v3h-3zM327 322h3v3h-3zM162 145h3v3h-3zM341 339h3v3h-3zM346 204h3v3h-3zM216 167h3v3h-3zM198 359h3v3h-3zM280 216h3v3h-3zM262 408h3v3h-3zM330 72h3v3h-3zM188 92h3v3h-3zM242 113h3v3h-3zM391 221h3v3h-3zM302 188h3v3h-3zM331 98h3v3h-3zM347 429h3v3h-3zM357 96h3v3h-3zM403 337h3v3h-3zM260 146h3v3h-3zM170 84h3v3h-3zM366 87h3v3h-3zM411 328h3v3h-3zM224 106h3v3h-3zM322 295h3v3h-3zM65 369h3v3h-3zM100 133h3v3h-3zM353 294h3v3h-3zM377 203h3v3h-3zM188 117h3v3h-3zM242 139h3v3h-3zM100 158h3v3h-3zM118 166h3v3h-3zM297 161h3v3h-3zM40 235h3v3h-3zM384 293h3v3h-3zM268 86h3v3h-3zM328 160h3v3h-3zM373 401h3v3h-3zM398 310h3v3h-3zM107 447h3v3h-3zM429 309h3v3h-3zM287 119h3v3h-3zM144 138h3v3h-3zM60 342h3v3h-3zM359 159h3v3h-3zM198 160h3v3h-3zM348 267h3v3h-3zM372 176h3v3h-3zM126 105h3v3h-3zM81 313h3v3h-3zM145 363h3v3h-3zM404 175h3v3h-3zM314 142h3v3h-3zM359 384h3v3h-3zM35 208h3v3h-3zM80 449h3v3h-3zM357 70h3v3h-3zM379 266h3v3h-3zM214 90h3v3h-3zM323 133h3v3h-3zM368 374h3v3h-3zM230 383h3v3h-3zM180 152h3v3h-3zM410 265h3v3h-3zM56 179h3v3h-3zM120 229h3v3h-3zM102 420h3v3h-3zM424 283h3v3h-3zM334 250h3v3h-3zM99 107h3v3h-3zM55 315h3v3h-3zM250 78h3v3h-3zM354 132h3v3h-3zM287 144h3v3h-3zM399 373h3v3h-3zM313 91h3v3h-3zM205 249h3v3h-3zM170 110h3v3h-3zM268 299h3v3h-3zM385 131h3v3h-3zM224 132h3v3h-3zM76 286h3v3h-3zM140 336h3v3h-3zM398 149h3v3h-3zM268 111h3v3h-3zM354 357h3v3h-3zM126 131h3v3h-3zM385 356h3v3h-3zM243 165h3v3h-3zM113 338h3v3h-3zM225 357h3v3h-3zM177 387h3v3h-3zM289 406h3v3h-3zM405 238h3v3h-3zM145 164h3v3h-3zM115 202h3v3h-3zM97 393h3v3h-3zM160 443h3v3h-3zM419 256h3v3h-3zM329 223h3v3h-3zM295 84h3v3h-3zM82 151h3v3h-3zM360 222h3v3h-3zM88 204h3v3h-3zM200 223h3v3h-3zM151 253h3v3h-3zM263 272h3v3h-3zM133 445h3v3h-3zM380 104h3v3h-3zM313 117h3v3h-3zM425 345h3v3h-3zM315 205h3v3h-3zM173 225h3v3h-3zM367 311h3v3h-3zM237 274h3v3h-3zM300 324h3v3h-3zM380 329h3v3h-3zM152 103h3v3h-3zM108 311h3v3h-3zM220 330h3v3h-3zM172 361h3v3h-3zM284 379h3v3h-3zM56 153h3v3h-3zM206 125h3v3h-3zM400 211h3v3h-3zM336 312h3v3h-3zM341 177h3v3h-3zM171 136h3v3h-3zM193 332h3v3h-3zM275 190h3v3h-3zM257 381h3v3h-3zM320 431h3v3h-3zM355 195h3v3h-3zM225 158h3v3h-3zM83 177h3v3h-3zM195 196h3v3h-3zM146 227h3v3h-3zM258 245h3v3h-3zM128 418h3v3h-3zM375 77h3v3h-3zM196 82h3v3h-3zM386 194h3v3h-3zM342 402h3v3h-3zM250 104h3v3h-3zM108 123h3v3h-3zM310 178h3v3h-3zM339 89h3v3h-3zM356 420h3v3h-3zM168 198h3v3h-3zM362 285h3v3h-3zM232 247h3v3h-3zM214 439h3v3h-3zM295 297h3v3h-3zM197 108h3v3h-3zM375 302h3v3h-3zM73 135h3v3h-3zM251 130h3v3h-3zM269 137h3v3h-3zM127 156h3v3h-3zM406 301h3v3h-3zM317 268h3v3h-3zM82 125h3v3h-3zM232 97h3v3h-3zM330 286h3v3h-3zM336 151h3v3h-3zM188 305h3v3h-3zM382 392h3v3h-3zM270 163h3v3h-3zM252 354h3v3h-3zM315 404h3v3h-3zM381 167h3v3h-3zM337 375h3v3h-3zM109 149h3v3h-3zM305 152h3v3h-3zM163 171h3v3h-3zM356 258h3v3h-3zM227 220h3v3h-3zM290 270h3v3h-3zM393 284h3v3h-3zM276 76h3v3h-3zM134 96h3v3h-3zM223 80h3v3h-3zM401 274h3v3h-3zM312 241h3v3h-3zM277 102h3v3h-3zM295 109h3v3h-3zM331 124h3v3h-3zM153 129h3v3h-3zM343 240h3v3h-3zM367 150h3v3h-3zM207 150h3v3h-3zM65 170h3v3h-3zM296 135h3v3h-3zM154 154h3v3h-3zM376 140h3v3h-3zM332 348h3v3h-3zM30 181h3v3h-3zM75 422h3v3h-3zM374 239h3v3h-3zM321 81h3v3h-3zM363 347h3v3h-3zM135 121h3v3h-3zM388 257h3v3h-3zM189 143h3v3h-3zM50 288h3v3h-3zM349 105h3v3h-3zM394 346h3v3h-3zM338 213h3v3h-3zM362 123h3v3h-3zM408 364h3v3h-3zM179 101h3v3h-3zM71 259h3v3h-3zM215 115h3v3h-3zM135 309h3v3h-3zM393 122h3v3h-3zM349 330h3v3h-3zM233 123h3v3h-3zM91 142h3v3h-3zM70 395h3v3h-3zM369 212h3v3h-3zM38 172h3v3h-3zM358 321h3v3h-3zM383 230h3v3h-3zM252 156h3v3h-3zM110 175h3v3h-3zM92 367h3v3h-3zM155 416h3v3h-3zM414 229h3v3h-3zM324 196h3v3h-3zM45 261h3v3h-3zM303 74h3v3h-3zM389 320h3v3h-3zM161 94h3v3h-3zM333 187h3v3h-3zM240 437h3v3h-3zM420 319h3v3h-3zM278 128h3v3h-3zM66 233h3v3h-3zM130 282h3v3h-3zM388 95h3v3h-3zM434 336h3v3h-3zM322 107h3v3h-3zM92 168h3v3h-3zM344 303h3v3h-3zM180 127h3v3h-3zM364 186h3v3h-3zM234 148h3v3h-3zM259 95h3v3h-3zM103 284h3v3h-3zM117 114h3v3h-3zM215 303h3v3h-3zM167 334h3v3h-3zM278 352h3v3h-3zM395 185h3v3h-3zM64 144h3v3h-3zM87 340h3v3h-3zM150 389h3v3h-3zM409 202h3v3h-3zM319 169h3v3h-3zM364 410h3v3h-3zM348 79h3v3h-3zM136 147h3v3h-3zM350 168h3v3h-3z" fill="#00ff00"/>
</svg>
</body></html>
